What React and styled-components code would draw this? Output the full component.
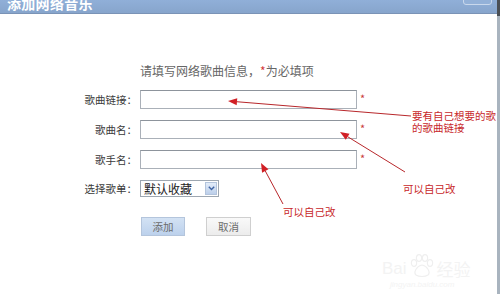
import React from "react";
import styled, { createGlobalStyle } from "styled-components";

const Global = createGlobalStyle`
  html, body { margin: 0; padding: 0; background: #fff; }
  body { font-family: "Noto Sans CJK SC", "Noto Sans", sans-serif; }
`;

const Page = styled.div`
  display: flex;
  width: 500px;
  height: 294px;
  overflow: hidden;
`;

const Dialog = styled.div`
  position: relative;
  flex: 0 0 497px;
  display: flex;
  flex-direction: column;
  background: #fff;
`;

const Edge = styled.div`
  flex: 0 0 3px;
  background: linear-gradient(#4a4f55 0, #4a4f55 16px, #a9b4bf 16px, #a9b4bf 100%);
`;

const TitleBar = styled.div`
  height: 13px;
  display: flex;
  align-items: flex-start;
  overflow: hidden;
  background: linear-gradient(#90afd8, #87a5cc);
  border-bottom: 1px solid #7a93b6;
  padding-left: 7px;
`;

const Title = styled.div`
  margin-top: -5px;
  color: #fff;
  font-weight: bold;
  font-size: 14px;
  line-height: 16px;
  letter-spacing: 0.3px;
  white-space: nowrap;
`;

const CloseBtn = styled.div`
  margin-left: auto;
  margin-right: 5px;
  margin-top: -12px;
  width: 27px;
  height: 15px;
  border: 1px solid #c9d8ec;
  border-radius: 3px;
  background: #93b1d8;
`;

const Body = styled.div`
  position: relative;
  flex: 1;
  padding-top: 49px;
`;

const Form = styled.div`
  display: grid;
  grid-template-columns: 57px 217px auto;
  column-gap: 3px;
  row-gap: 11px;
  padding-left: 80px;
`;

const Heading = styled.div`
  grid-column: 2 / 4;
  font-size: 12px;
  line-height: 16px;
  color: #666;
  white-space: nowrap;
`;

const Req = styled.span`
  color: #d43a3a;
`;

const Label = styled.div`
  align-self: center;
  text-align: right;
  font-size: 10.5px;
  color: #3a3a3a;
  white-space: nowrap;
`;

const Input = styled.div`
  box-sizing: border-box;
  height: 19px;
  border: 1px solid #aab0b8;
  border-top-color: #8d949c;
  background: #fff;
`;

const Star = styled.div`
  align-self: start;
  padding-top: 3px;
  font-size: 11px;
  line-height: 1;
  color: #c93a3a;
`;

const SelectBox = styled.div`
  box-sizing: border-box;
  width: 79px;
  height: 17px;
  display: flex;
  align-items: center;
  border: 1px solid #9ea7b1;
  background: #fff;
`;

const SelectText = styled.span`
  flex: 1;
  padding-left: 3px;
  font-size: 12px;
  line-height: 15px;
  color: #222;
  white-space: nowrap;
`;

const ArrowBtn = styled.div`
  width: 12px;
  height: 13px;
  margin-right: 1px;
  display: flex;
  align-items: center;
  justify-content: center;
  background: linear-gradient(#e3ecf9, #bccfea);
  border: 1px solid #b3c4dc;
  box-sizing: border-box;
`;

const Buttons = styled.div`
  grid-column: 2 / 4;
  display: flex;
  gap: 21px;
  margin-top: 9px;
  padding-left: 1px;
`;

const Button = styled.div`
  box-sizing: border-box;
  width: ${(p) => p.$w}px;
  height: 19px;
  display: flex;
  align-items: center;
  justify-content: center;
  font-size: 10.5px;
  color: #6b6b6b;
  border: 1px solid ${(p) => (p.$primary ? "#b4c5dc" : "#cfcfcf")};
  background: ${(p) =>
    p.$primary ? "linear-gradient(#d3e2f4, #bcd1ec)" : "linear-gradient(#f9f9f9, #ececec)"};
`;

const Overlay = styled.svg`
  position: absolute;
  left: 0;
  top: 0;
  pointer-events: none;
`;

const Note = styled.div`
  position: absolute;
  left: ${(p) => p.$x}px;
  top: ${(p) => p.$y}px;
  font-size: 10.5px;
  line-height: 12px;
  color: #c8282b;
  white-space: nowrap;
`;

const Watermark = styled.div`
  position: absolute;
  left: 382px;
  top: 240px;
  width: 100px;
  color: #f3f3f3;
  font-family: "Liberation Sans", sans-serif;
`;

const WmTop = styled.div`
  display: flex;
  align-items: flex-end;
  gap: 2px;
  font-size: 17px;
  line-height: 18px;
`;

const WmCjk = styled.span`
  font-family: "Noto Sans CJK SC", sans-serif;
`;

const WmSub = styled.div`
  font-size: 8px;
  font-style: italic;
  padding-left: 8px;
  margin-top: 2px;
`;

function Arrow({ x1, y1, x2, y2 }) {
  const ang = Math.atan2(y2 - y1, x2 - x1);
  const L = 9, W = 3.6;
  const bx = x2 - L * Math.cos(ang), by = y2 - L * Math.sin(ang);
  const px = -Math.sin(ang) * W, py = Math.cos(ang) * W;
  return (
    <g>
      <line x1={x1} y1={y1} x2={bx} y2={by} stroke="#b8272b" strokeWidth="1" />
      <polygon
        points={`${x2},${y2} ${bx + px},${by + py} ${bx - px},${by - py}`}
        fill="#d11f25"
      />
    </g>
  );
}

export default function App() {
  return (
    <>
      <Global />
      <Page>
        <Dialog>
          <TitleBar>
            <Title>添加网络音乐</Title>
            <CloseBtn />
          </TitleBar>
          <Body>
            <Form>
              <div />
              <Heading>
                请填写网络歌曲信息，<Req>*</Req>为必填项
              </Heading>
              <Label>歌曲链接：</Label>
              <Input />
              <Star>*</Star>
              <Label>歌曲名：</Label>
              <Input />
              <Star>*</Star>
              <Label>歌手名：</Label>
              <Input />
              <Star>*</Star>
              <Label>选择歌单：</Label>
              <SelectBox>
                <SelectText>默认收藏</SelectText>
                <ArrowBtn>
                  <svg width="7" height="5" viewBox="0 0 7 5">
                    <path d="M0.8 0.8 L3.5 3.6 L6.2 0.8" fill="none" stroke="#3f64a3" strokeWidth="1.4" />
                  </svg>
                </ArrowBtn>
              </SelectBox>
              <div />
              <div />
              <Buttons>
                <Button $primary $w={44}>添加</Button>
                <Button $w={45}>取消</Button>
              </Buttons>
            </Form>
            <Watermark>
              <WmTop>
                <span>Bai</span>
                <svg width="26" height="24" viewBox="0 0 26 24">
                  <g fill="none" stroke="#efefef" strokeWidth="1.2">
                    <ellipse cx="5" cy="9" rx="2.6" ry="3.4" />
                    <ellipse cx="10" cy="4" rx="2.6" ry="3.4" />
                    <ellipse cx="16" cy="4" rx="2.6" ry="3.4" />
                    <ellipse cx="21" cy="9" rx="2.6" ry="3.4" />
                    <path d="M7 21 C4 18 8 12 13 11 C18 12 22 18 19 21 C16 23 10 23 7 21 Z" />
                  </g>
                </svg>
                <WmCjk>经验</WmCjk>
              </WmTop>
              <WmSub>jingyan.baidu.com</WmSub>
            </Watermark>
          </Body>
          <Overlay width="497" height="294" viewBox="0 0 497 294">
            <Arrow x1={411} y1={116} x2={228} y2={101} />
            <Arrow x1={405} y1={172} x2={340} y2={132} />
            <Arrow x1={283} y1={204} x2={261} y2={163} />
          </Overlay>
          <Note $x={412} $y={110}>
            要有自己想要的歌
            <br />
            的歌曲链接
          </Note>
          <Note $x={403} $y={183}>可以自己改</Note>
          <Note $x={283} $y={206}>可以自己改</Note>
        </Dialog>
        <Edge />
      </Page>
    </>
  );
}
